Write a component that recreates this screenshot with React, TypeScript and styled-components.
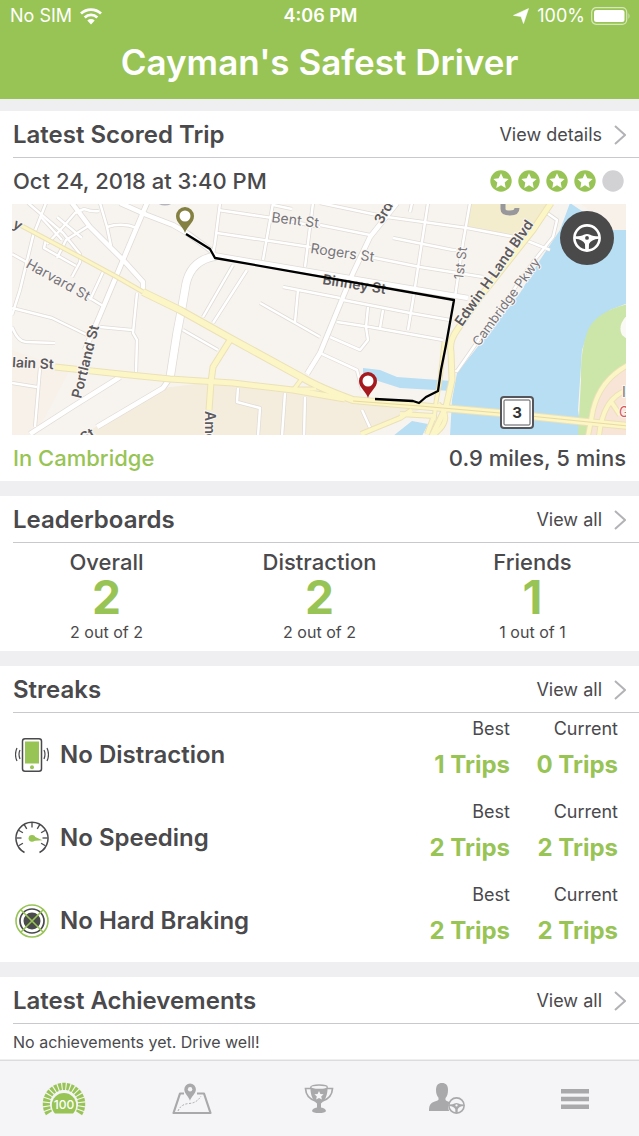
import React from "react";
import styled, { createGlobalStyle } from "styled-components";

const ink = "#4a494c";
const green = "#98c455";
const line = "#c9c8cc";
const muted = "#a9a8aa";

const GlobalStyle = createGlobalStyle`
  *, *::before, *::after { box-sizing: border-box; }
  body { margin: 0; background: #efeef1; color: ${ink}; font-family: Inter, "Liberation Sans", sans-serif; }
  h1, h2, h3, p { margin: 0; padding: 0; }
  a { color: inherit; text-decoration: none; }
  button { border: 0; padding: 0; background: none; color: inherit; font: inherit; cursor: pointer; }
  svg { display: block; }
`;

const Page = styled.div`
  display: flex;
  flex-direction: column;
  min-height: 100vh;
`;

const Header = styled.header`
  height: 99px;
  background: ${green};
  color: #fff;
`;

const StatusBar = styled.div`
  display: grid;
  grid-template-columns: 1fr auto 1fr;
  align-items: center;
  height: 32px;
  padding: 0 8px 0 10px;
  font-size: 18px;
  line-height: 24px;
`;

const StatusGroup = styled.div<{ $end?: boolean }>`
  display: flex;
  align-items: center;
  gap: ${(p) => (p.$end ? 6 : 8)}px;
  justify-content: ${(p) => (p.$end ? "flex-end" : "flex-start")};
`;

const Clock = styled.span`
  font-size: 18px;
  font-weight: 600;
`;

const Title = styled.h1`
  padding-top: 6px;
  text-align: center;
  font-size: 35px;
  line-height: 48px;
  font-weight: 600;
`;

const Main = styled.main`
  display: flex;
  flex-direction: column;
  gap: 15px;
  padding-top: 12px;
`;

const Section = styled.section`
  background: #fff;
`;

const SectionHead = styled.div`
  display: flex;
  align-items: center;
  justify-content: space-between;
  height: 47px;
  margin-left: 13px;
  padding: 2px 13px 0 0;
  border-bottom: 1px solid ${line};
`;

const SectionTitle = styled.h2`
  font-size: 24px;
  line-height: 32px;
  font-weight: 600;
`;

const MoreLink = styled.a`
  display: flex;
  align-items: center;
  gap: 12px;
  font-size: 18px;
  line-height: 24px;
`;

const TripRow = styled.div`
  display: flex;
  align-items: center;
  justify-content: space-between;
  height: 46px;
  padding: 0 13px;
  font-size: 22px;
  line-height: 28px;
  font-weight: 500;
`;

const Stars = styled.div`
  display: flex;
  gap: 6px;
  margin-right: 2px;
`;

const MapFrame = styled.div`
  position: relative;
  margin: 0 13px 0 12px;
`;

const MapArt = styled.svg`
  width: 100%;
  height: 231px;
`;

const MapButton = styled.button`
  position: absolute;
  top: 7px;
  right: 12px;
  width: 54px;
  height: 54px;
  border-radius: 50%;
  display: grid;
  place-items: center;
  background: #4a4a4a;
  color: #fff;
`;

const Place = styled.span`
  color: ${green};
`;

const Boards = styled.div`
  display: grid;
  grid-template-columns: repeat(3, 1fr);
  height: 108px;
  padding-top: 7px;
  text-align: center;
`;

const BoardName = styled.h3`
  font-size: 22px;
  line-height: 24px;
  font-weight: 500;
`;

const BoardRank = styled.p`
  color: ${green};
  font-size: 46px;
  line-height: 46px;
  font-weight: 700;
`;

const BoardNote = styled.p`
  font-size: 16px;
  line-height: 24px;
`;

const StreakTable = styled.table`
  width: 100%;
  border-collapse: collapse;

  tr { height: 83px; }
  th, td { padding: 0; vertical-align: middle; }
`;

const StreakName = styled.th`
  text-align: left;
  font-size: 24px;
  line-height: 32px;
  font-weight: 600;
`;

const StreakLabel = styled.div`
  display: flex;
  align-items: center;
  gap: 11px;
  padding-left: 15px;
`;

const StreakCell = styled.td<{ $width: number; $pad: number }>`
  width: ${(p) => p.$width}px;
  text-align: right;

  && {
    padding: 4px ${(p) => p.$pad}px 0 0;
    vertical-align: top;
  }
`;

const StreakCaption = styled.p`
  font-size: 18px;
  line-height: 24px;
`;

const StreakValue = styled.p`
  margin-top: 10px;
  color: ${green};
  font-size: 24px;
  line-height: 28px;
  font-weight: 700;
`;

const Note = styled.p`
  height: 35px;
  padding: 0 13px;
  font-size: 16px;
  line-height: 36px;
`;

const TabBar = styled.nav`
  display: grid;
  grid-template-columns: repeat(5, 1fr);
  height: 76px;
  margin-top: auto;
  border-top: 1px solid #dcdbde;
  background: #f5f4f7;
`;

const Tab = styled.a<{ $active?: boolean }>`
  display: grid;
  place-items: center;
  color: ${(p) => (p.$active ? green : muted)};
`;

const Chevron = () => (
  <svg width="12" height="22" viewBox="0 0 12 22" fill="none" stroke="#b3b2b6" strokeWidth="2" aria-hidden="true">
    <path d="M1 2l10 9-10 9" />
  </svg>
);

const STAR = "M11 3.300l2.300 4.900 5.300.7-3.900 3.700 1 5.300-4.700-2.600-4.700 2.600 1-5.300-3.900-3.700 5.300-.7z";

const Rating = ({ value }: { value: number }) => (
  <Stars role="img" aria-label={`${value} of 5 stars`}>
    {[0, 1, 2, 3, 4].map((i) => (
      <svg key={i} width="22" height="22" viewBox="0 0 22 22">
        <circle cx="11" cy="11" r="10.700" fill={i < value ? green : "#d2d1d4"} />
        {i < value && <path d={STAR} fill="#fff" />}
      </svg>
    ))}
  </Stars>
);

const Wheel = ({ size }: { size: number }) => (
  <svg width={size} height={size} viewBox="0 0 28 28" aria-hidden="true">
    <circle cx="14" cy="14" r="12.600" fill="none" stroke="currentColor" strokeWidth="2.600" />
    <path
      d="M2 12.300Q8 12.300 10.800 10.800 14 9.300 17.200 10.800 20 12.300 26 12.300V14.800Q18 15.500 16 20L15.800 26H12.200L12 20Q10 15.500 2 14.800zM14 12a1.900 1.900 0 1 0 0 3.800 1.900 1.900 0 0 0 0-3.800z"
      fill="currentColor"
      fillRule="evenodd"
    />
  </svg>
);

const minorRoads = [
  "M28 203L63 233 80 254 80 262 72 277",
  "M46 203L33 236 20 290 12 315",
  "M100 203L107 227 111 246",
  "M107 227Q122 222 137 228",
  "M40 216L62 240M57 217L82 238M47 244L63 227 75 213 84 209Q92 212 99 211",
  "M46 240L44 248 76 266M57 258L66 240 90 225",
  "M12 254L30 264M80 292L103 306M103 272L90 300",
  "M220 203L215 243 213 254",
  "M273 203L263 260M313 203L305 267M218 210L272 218 320 227M217 233L310 247 325 249",
  "M273 205L292 209",
  "M320 203L387 217 467 228 520 238 550 250M320 225L370 235M393 238L453 250 456 250M370 257L420 267 483 277",
  "M412 203L410 212M428 203L413 300 408 330M470 203L463 243 455 297",
  "M343 300L410 313 450 320M337 322L370 327 443 340M368 307L366 327 368 340 360 350 330 337M383 310L380 328",
  "M320 353L357 370 362 390",
  "M233 265L203 317M247 270L213 323M283 287L340 298M298 290L295 322M260 303L320 337",
  "M183 330L218 350M137 293L133 333 137 340 136 372M100 327L132 330",
  "M12 308L52 318 87 335M12 327Q18 342 26 342L55 343M40 368L35 427M12 383L37 387",
  "M238 388L237 402 260 408 258 436M285 393L282 436M305 397L304 436M362 410L372 432",
  "M547 213L557 220 553 237 533 262 457 371 450 371",
];

const streets = [
  "M147 203L123 260 100 315 85 350",
  "M72 203L90 227 125 262 143 282 143 291",
  "M120 203L147 215 173 225 187 233 213 252",
  "M397 203L370 237 353 273 343 297 320 353 307 374",
  "M120 377L72 407 30 434",
  "M213 255L320 273 468 298",
  "M170 378L163 388 97 427",
];

const avenues = ["M216 256Q191 260 186 284L182 307 177 333 170 378"];

const yellowRoads = [
  { d: "M20 225L80 257 117 277 143 292", w: 3 },
  { d: "M143 292L180 310 230 338 303 378Q320 388 353 400L420 406 500 413 587 422 628 426", w: 6 },
  { d: "M55 367L120 374 170 379 233 383 293 390 345 399", w: 5 },
  { d: "M230 340L213 367 211 382 209 410", w: 5 },
  { d: "M304 376L294 389 316 389", w: 3 },
  { d: "M551 203L533 230 480 297 457 330Q449 341 451 352L452 380 446 407 432 436", w: 5 },
  { d: "M444 342L440 380 436 402 434 420", w: 3 },
  { d: "M361 434L400 418 412 410M400 414L434 416 427 434M438 404Q455 420 432 436", w: 4 },
  { d: "M628 365Q600 380 593 410L588 436M628 390Q603 397 599 436M610 400L620 415", w: 4 },
];

const route = "M186 234L210 249 215 258 454 300 446 345 441 370 438 391 426 397 419 403 413 401 375 399";

const Pin = ({ x, y, color }: { x: number; y: number; color: string }) => (
  <g transform={`translate(${x} ${y})`}>
    <path d="M0 0C-2-7-9-10-9-17a9 9 0 0 1 18 0C9-10 2-7 0 0z" fill={color} />
    <circle cy="-17" r="5.500" fill="#fff" />
  </g>
);

const TripMap = () => (
  <MapArt viewBox="12 204 614 231" preserveAspectRatio="xMidYMid slice" role="img" aria-label="Route driven in Cambridge">
    <rect x="12" y="204" width="614" height="231" fill="#f7f4f0" />
    <path d="M163 388L210 382 293 393 353 402 420 410 360 436H80z" fill="#f4eddd" />
    <path d="M12 350L70 370 35 436H12z" fill="#f8f1ea" />
    <path d="M470 203H550L520 240Q495 232 467 228z" fill="#f3eccd" />
    <path d="M570 203L560 230 540 260 520 293 457 373 452 400 450 436H582L578 410 582 350 590 327 610 310 628 303V230H610z" fill="#b7def3" />
    <path d="M580 203L610 230H628V203z" fill="#f7f1ea" />
    <path d="M363 368L380 370 397 377 452 381V391L400 388 375 380 363 376zM393 436L412 421 428 424 422 436z" fill="#b7def3" />
    <path d="M628 304Q597 311 588 330 580 350 581 380L578 436H628z" fill="#cce5a9" />
    <path d="M628 365Q595 385 589 436H628z" fill="#f8e5d8" />
    <path d="M628 314Q617 325 622 335L628 340z" fill="#fbf9f5" />
    <g fill="none" strokeLinejoin="round">
      {minorRoads.map((d) => <path key={d} d={d} stroke="#e0dbd6" strokeWidth="4" />)}
      {streets.map((d) => <path key={d} d={d} stroke="#e0dbd6" strokeWidth="6" />)}
      {avenues.map((d) => <path key={d} d={d} stroke="#e0dbd6" strokeWidth="9" />)}
      {minorRoads.map((d) => <path key={d} d={d} stroke="#fff" strokeWidth="2.500" />)}
      {streets.map((d) => <path key={d} d={d} stroke="#fff" strokeWidth="4.500" />)}
      {avenues.map((d) => <path key={d} d={d} stroke="#fff" strokeWidth="7.500" />)}
      {yellowRoads.map((r) => <path key={r.d} d={r.d} stroke="#ebe1b8" strokeWidth={r.w + 2} />)}
      {yellowRoads.map((r) => <path key={r.d} d={r.d} stroke="#fcf5c6" strokeWidth={r.w} />)}
      <path d="M353 401L420 406 500 413 628 426" stroke="#e9d9a0" strokeWidth="1" />
    </g>
    <g fontSize="14" fill="#77757a" stroke="#faf7f3" strokeWidth="2" paintOrder="stroke">
      <text transform="translate(271 222) rotate(7)">Bent St</text>
      <text transform="translate(310 253) rotate(8)">Rogers St</text>
      <text transform="translate(25 267) rotate(29)">Harvard St</text>
      <text transform="translate(622 397)">I</text>
      <text transform="translate(619 417)" fill="#d9585b">G</text>
    </g>
    <g fontSize="13" fill="#77757a" stroke="#faf7f3" strokeWidth="2" paintOrder="stroke">
      <text transform="translate(463 280) rotate(-83)">1st St</text>
      <text transform="translate(479 347) rotate(-54)">Cambridge Pkwy</text>
    </g>
    <g fontSize="14" fontWeight="600" fill="#5c5a5d" stroke="#faf7f3" strokeWidth="2" paintOrder="stroke">
      <text transform="translate(382 225) rotate(-60)">3rd</text>
      <text transform="translate(322 284) rotate(9)">Binney St</text>
      <text transform="translate(462 327) rotate(-55)">Edwin H Land Blvd</text>
      <text transform="translate(81 399) rotate(-76)">Portland St</text>
      <text transform="translate(12 367) rotate(3)">lain St</text>
      <text transform="translate(205 411) rotate(90)">Ame</text>
      <text transform="translate(84 443) rotate(-32)">St</text>
      <text transform="translate(12 227) rotate(28)">y</text>
    </g>
    <path d="M503 201V209Q503 213 510 213T517 208" fill="none" stroke="#98979c" strokeWidth="5" />
    <path d="M159 203Q165 206 171 203" fill="none" stroke="#b5b4bd" strokeWidth="2" />
    <path d={route} fill="none" stroke="#000" strokeWidth="2.300" strokeLinejoin="round" />
    <Pin x={185} y={233} color="#838042" />
    <Pin x={368} y={398} color="#a51a1e" />
    <rect x="501" y="397" width="32" height="31" rx="3" fill="#fff" stroke="#565559" strokeWidth="2" />
    <rect x="504" y="400" width="26" height="25" rx="1" fill="#fff" stroke="#565559" strokeWidth="1" />
    <text x="517" y="418" textAnchor="middle" fontSize="15" fontWeight="700" fill="#333">3</text>
  </MapArt>
);

const PhoneIcon = () => (
  <svg width="34" height="34" viewBox="0 0 34 34" fill="none" stroke={ink} aria-hidden="true">
    <rect x="7.500" y=".8" width="19" height="32.400" rx="2.500" strokeWidth="1.500" />
    <rect x="10" y="3.500" width="14" height="22" fill={green} stroke="none" />
    <circle cx="17" cy="29.300" r="2" fill={green} stroke="none" />
    <path d="M5 12q-2 4 0 9M2 10q-3 6.500 0 13M29 12q2 4 0 9M32 10q3 6.500 0 13" strokeWidth="1.200" />
  </svg>
);

const GaugeIcon = () => (
  <svg width="34" height="34" viewBox="0 0 34 34" fill="none" stroke={ink} aria-hidden="true">
    <path d="M9.500 31.500a16 16 0 1 1 15 0" strokeWidth="1.500" />
    {[-120, -90, -60, -30, 0, 30, 60, 90, 120].map((a) => (
      <path key={a} d="M17 1.500v5" strokeWidth="1.300" transform={`rotate(${a} 17 17)`} />
    ))}
    <path d="M17 14.500l10.500 4.700-10.500.8z" fill={green} stroke="none" />
    <circle cx="17" cy="17.300" r="3.400" fill={green} stroke="none" />
  </svg>
);

const BrakeIcon = () => (
  <svg width="34" height="34" viewBox="0 0 34 34" fill="none" aria-hidden="true">
    <circle cx="17" cy="17" r="12" stroke={ink} strokeWidth="1.700" />
    <circle cx="17" cy="17" r="8.500" fill={ink} />
    <circle cx="17" cy="17" r="16" stroke={green} strokeWidth="1.600" />
    <path d="M6 6l22 22M28 6L6 28" stroke={green} strokeWidth="1.600" />
  </svg>
);

const ScoreIcon = () => (
  <svg width="44" height="34" viewBox="0 0 44 34" aria-hidden="true">
    {Array.from({ length: 19 }, (_, i) => -117 + i * 13).map((a) => (
      <path key={a} d="M20.200.8h3.600l-.7 7.200h-2.200z" fill="currentColor" transform={`rotate(${a} 22 22)`} />
    ))}
    <path d="M13 31.500a12.200 12.200 0 1 1 18 0z" fill="currentColor" />
    <text x="22" y="26.500" textAnchor="middle" fontSize="12" fontWeight="500" fill="#fff">100</text>
  </svg>
);

const MapIcon = () => (
  <svg width="40" height="32" viewBox="0 0 40 32" fill="none" stroke="currentColor" aria-hidden="true">
    <path d="M12 10.500H8L1.500 30h37L32 10.500h-7" strokeWidth="2.200" strokeLinejoin="round" />
    <path d="M6 28Q9 21 17 20.500T29 13" strokeWidth="1" strokeDasharray="2 1.500" />
    <path d="M18 18C17 13.500 12.300 11 12.300 6.300a5.800 5.800 0 0 1 11.600 0C23.900 11 19 13.500 18 18z" fill="currentColor" stroke="none" />
    <circle cx="18.100" cy="6.300" r="2.200" fill="#f5f4f7" stroke="none" />
  </svg>
);

const TrophyIcon = () => (
  <svg width="30" height="30" viewBox="0 0 30 30" fill="none" stroke="currentColor" aria-hidden="true">
    <path d="M7 4.500H1.500Q2 14 11.500 17M23 4.500h5.500Q28 14 18.500 17" strokeWidth="1.700" />
    <path d="M6.500 3Q15 6 23.500 3C24 12 20 17.500 17 19.500v4q4.500.8 5 3.500-1 2-7 2t-7-2q.5-2.700 5-3.500v-4C10 17.500 6 12 6.500 3z" fill="currentColor" stroke="none" />
    <ellipse cx="15" cy="3.200" rx="8.300" ry="2.200" fill="#f5f4f7" strokeWidth="1.300" />
    <path d="M15 7l1.400 3 3.200.3-2.400 2.100.7 3.200-2.900-1.700-2.900 1.700.7-3.200-2.400-2.100 3.200-.3z" fill="#f5f4f7" stroke="none" />
  </svg>
);

const DriverIcon = () => (
  <svg width="36" height="31" viewBox="0 0 36 31" aria-hidden="true">
    <path d="M13 0c4 0 6 2.500 6 7 0 4-1 6.500-2.500 8v2c1 1.300 2.700 1.500 4.500 2.300-2 2.700-2.500 5.700-.8 8.700H0c0-5 1.200-7.500 4-8.700 2.500-1 4.500-1.300 5.500-2.500v-2C8 13 7 10.500 7 7c0-4.500 2-7 6-7z" fill="currentColor" />
    <g transform="translate(19 14)">
      <Wheel size={17} />
    </g>
  </svg>
);

const MenuIcon = () => (
  <svg width="28" height="20" viewBox="0 0 28 20" aria-hidden="true">
    <path d="M0 0h28v4.500H0zM0 7.800h28v4.500H0zM0 15.500h28V20H0z" fill="currentColor" />
  </svg>
);

const WifiIcon = () => (
  <svg width="22" height="17" viewBox="0 0 22 17" fill="none" stroke="#fff" strokeWidth="2.800" aria-hidden="true">
    <path d="M1 5.600a14.500 14.500 0 0 1 20 0M4.700 9.400a9.200 9.200 0 0 1 12.600 0" />
    <path d="M11 16.500l-3.700-4a5.500 5.500 0 0 1 7.400 0z" fill="#fff" stroke="none" />
  </svg>
);

const LocationIcon = () => (
  <svg width="18" height="16" viewBox="0 0 18 16" fill="#fff" aria-hidden="true">
    <path d="M15.500.6L10.500 15.500 8 8.400.5 7.400z" stroke="#fff" strokeWidth=".6" strokeLinejoin="round" />
  </svg>
);

const BatteryIcon = () => (
  <svg width="40" height="18" viewBox="0 0 40 18" aria-hidden="true">
    <rect x=".7" y=".7" width="35" height="16.600" rx="4.500" fill="none" stroke="#d6e7bb" strokeWidth="1.200" />
    <rect x="3" y="3" width="30.500" height="12" rx="2.500" fill="#fff" />
    <path d="M37.500 6q2 3 0 6z" fill="#d6e7bb" />
  </svg>
);

const boards = [
  { name: "Overall", rank: 2, note: "2 out of 2" },
  { name: "Distraction", rank: 2, note: "2 out of 2" },
  { name: "Friends", rank: 1, note: "1 out of 1" },
];

const streaks = [
  { name: "No Distraction", Icon: PhoneIcon, best: 1, current: 0 },
  { name: "No Speeding", Icon: GaugeIcon, best: 2, current: 2 },
  { name: "No Hard Braking", Icon: BrakeIcon, best: 2, current: 2 },
];

const tabs = [
  { label: "Score", Icon: ScoreIcon },
  { label: "Trips", Icon: MapIcon },
  { label: "Leaderboards", Icon: TrophyIcon },
  { label: "Profile", Icon: DriverIcon },
  { label: "Menu", Icon: MenuIcon },
];

const Head = ({ title, link }: { title: string; link: string }) => (
  <SectionHead>
    <SectionTitle>{title}</SectionTitle>
    <MoreLink href="#">
      {link}
      <Chevron />
    </MoreLink>
  </SectionHead>
);

export default function App() {
  return (
    <Page>
      <GlobalStyle />
      <Header>
        <StatusBar>
          <StatusGroup>
            No SIM
            <WifiIcon />
          </StatusGroup>
          <Clock>4:06 PM</Clock>
          <StatusGroup $end>
            <LocationIcon />
            100%
            <BatteryIcon />
          </StatusGroup>
        </StatusBar>
        <Title>Cayman's Safest Driver</Title>
      </Header>
      <Main>
        <Section>
          <Head title="Latest Scored Trip" link="View details" />
          <TripRow>
            <span>Oct 24, 2018 at 3:40 PM</span>
            <Rating value={4} />
          </TripRow>
          <MapFrame>
            <TripMap />
            <MapButton type="button" aria-label="Driver">
              <Wheel size={28} />
            </MapButton>
          </MapFrame>
          <TripRow>
            <Place>In Cambridge</Place>
            <span>0.9 miles, 5 mins</span>
          </TripRow>
        </Section>
        <Section>
          <Head title="Leaderboards" link="View all" />
          <Boards>
            {boards.map((b) => (
              <div key={b.name}>
                <BoardName>{b.name}</BoardName>
                <BoardRank>{b.rank}</BoardRank>
                <BoardNote>{b.note}</BoardNote>
              </div>
            ))}
          </Boards>
        </Section>
        <Section>
          <Head title="Streaks" link="View all" />
          <StreakTable>
            <tbody>
              {streaks.map(({ name, Icon, best, current }) => (
                <tr key={name}>
                  <StreakName scope="row">
                    <StreakLabel>
                      <Icon />
                      {name}
                    </StreakLabel>
                  </StreakName>
                  <StreakCell $width={120} $pad={0}>
                    <StreakCaption>Best</StreakCaption>
                    <StreakValue>{best} Trips</StreakValue>
                  </StreakCell>
                  <StreakCell $width={129} $pad={21}>
                    <StreakCaption>Current</StreakCaption>
                    <StreakValue>{current} Trips</StreakValue>
                  </StreakCell>
                </tr>
              ))}
            </tbody>
          </StreakTable>
        </Section>
        <Section>
          <Head title="Latest Achievements" link="View all" />
          <Note>No achievements yet. Drive well!</Note>
        </Section>
      </Main>
      <TabBar>
        {tabs.map(({ label, Icon }, i) => (
          <Tab key={label} href="#" $active={i === 0} aria-label={label}>
            <Icon />
          </Tab>
        ))}
      </TabBar>
    </Page>
  );
}
